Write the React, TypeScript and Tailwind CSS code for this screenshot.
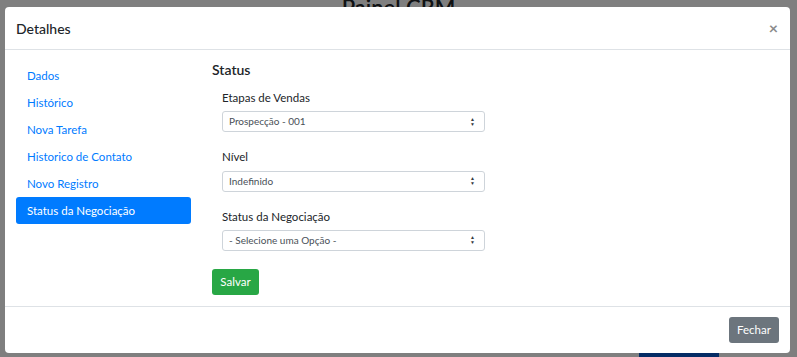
const links = ["Dados", "Histórico", "Nova Tarefa", "Historico de Contato", "Novo Registro", "Status da Negociação"];

const SelectBox = ({ value }: { value: string }) => (
  <div className="flex h-[21px] w-[263px] items-center justify-between rounded-[3px] border border-[#ced4da] bg-white pl-[6px] pr-[9px] text-[10px] text-[#495057]">
    <span>{value}</span>
    <span className="flex flex-col items-center leading-none text-[#343a40]">
      <span className="text-[5px]">▲</span>
      <span className="text-[5px]">▼</span>
    </span>
  </div>
);

const Field = ({ label, value }: { label: string; value: string }) => (
  <div className="flex flex-col gap-[5px] pl-[10px]">
    <label className="text-[11.5px] text-[#212529]">{label}</label>
    <SelectBox value={value} />
  </div>
);

export default function App() {
  return (
    <div className="relative h-[357px] w-[797px] overflow-hidden bg-white font-['Lato','Open_Sans',sans-serif]">
      {/* pagina por tras */}
      <div className="flex justify-center">
        <h1 className="-mt-[9px] text-[22px] font-semibold text-[#212529]">Painel CRM</h1>
      </div>
      <div className="absolute left-0 top-[350px] flex w-full items-center gap-[40px] whitespace-nowrap pl-[45px] text-[10px] text-[#212529]">
        <span>01/01/2021</span>
        <span>Teste</span>
        <span>Prospecção</span>
        <span>Contato feito</span>
        <span>Normal</span>
        <span>Abertura</span>
        <span>05/01/2021</span>
        <span className="w-[80px] rounded-[3px] bg-[#0a58ca] py-[3px] text-center text-white">Detalhes</span>
      </div>

      {/* backdrop */}
      <div className="absolute inset-0 bg-black/50" />

      {/* modal */}
      <div className="absolute left-[5px] top-[7px] flex h-[346px] w-[785px] flex-col rounded-[4px] bg-white">
        <div className="flex h-[43px] items-center justify-between border-b border-[#dee2e6] pl-[11px] pr-[12px]">
          <h5 className="text-[14px] font-medium text-[#212529]">Detalhes</h5>
          <span className="text-[16px] leading-none font-bold text-[#8a8a8a]">×</span>
        </div>

        <div className="flex flex-1 gap-[21px] pl-[11px] pt-[6px]">
          <nav className="flex w-[175px] flex-col pt-[6px]">
            {links.map((l, i) => (
              <a
                key={l}
                className={
                  i === links.length - 1
                    ? "flex h-[27px] items-center rounded-[3px] bg-[#007bff] px-[11px] text-[11.5px] text-white"
                    : "flex h-[27px] items-center px-[11px] text-[11.5px] text-[#007bff]"
                }
              >
                {l}
              </a>
            ))}
          </nav>

          <div className="flex flex-col pt-[3px]">
            <h4 className="text-[14px] font-semibold text-[#212529]">Status</h4>
            <div className="mt-[9px] flex flex-col gap-[16px]">
              <Field label="Etapas de Vendas" value="Prospecção - 001" />
              <Field label="Nível" value="Indefinido" />
              <Field label="Status da Negociação" value="- Selecione uma Opção -" />
            </div>
            <button className="mt-[18px] h-[26px] w-[47px] rounded-[3px] bg-[#28a745] text-[11.5px] text-white">Salvar</button>
          </div>
        </div>

        <div className="flex h-[47px] items-center justify-end border-t border-[#dee2e6] pr-[11px]">
          <button className="h-[26px] w-[50px] rounded-[3px] bg-[#6c757d] text-[11.5px] text-white">Fechar</button>
        </div>
      </div>
    </div>
  );
}
